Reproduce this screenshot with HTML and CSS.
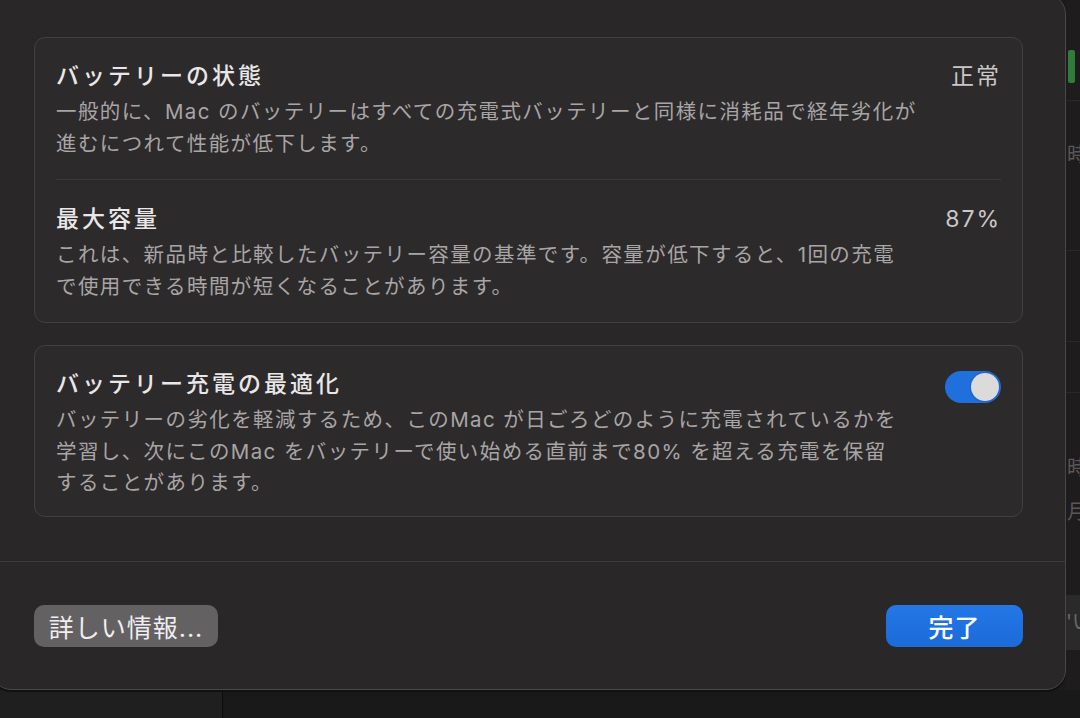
FILE: index.html
```html
<!DOCTYPE html>
<html lang="ja">
<head>
  <meta charset="UTF-8">
  <meta name="viewport" content="width=device-width, initial-scale=1.0">
  <title>バッテリーの状態</title>
  <link rel="stylesheet" href="styles.css">
</head>
<body>
  <div class="screen">
    <div class="sheet">
      <div class="sheet-body">

        <!-- Health card -->
        <section class="card">
          <div class="row">
            <div class="row-text">
              <h3 class="row-title">バッテリーの状態</h3>
              <p class="row-desc">一般的に、Mac のバッテリーはすべての充電式バッテリーと同様に消耗品で経年劣化が<br>進むにつれて性能が低下します。</p>
            </div>
            <span class="row-value">正常</span>
          </div>
          <div class="row">
            <div class="row-text">
              <h3 class="row-title">最大容量</h3>
              <p class="row-desc">これは、新品時と比較したバッテリー容量の基準です。容量が低下すると、1回の充電<br>で使用できる時間が短くなることがあります。</p>
            </div>
            <span class="row-value">87%</span>
          </div>
        </section>

        <!-- Optimized charging card -->
        <section class="card card-single">
          <div class="row">
            <div class="row-text">
              <h3 class="row-title">バッテリー充電の最適化</h3>
              <p class="row-desc">バッテリーの劣化を軽減するため、このMac が日ごろどのように充電されているかを<br>学習し、次にこのMac をバッテリーで使い始める直前まで80% を超える充電を保留<br>することがあります。</p>
            </div>
            <span class="toggle on"><span class="knob"></span></span>
          </div>
        </section>

      </div>
      <div class="sheet-footer">
        <button type="button" class="btn btn-grey">詳しい情報...</button>
        <button type="button" class="btn btn-blue">完了</button>
      </div>
    </div>

    <!-- window behind the sheet -->
    <div class="side">
      <span class="side-bar"></span>
      <span class="side-line line-a"></span>
      <span class="side-text text-a">時</span>
      <span class="side-line line-b"></span>
      <span class="side-line line-c"></span>
      <span class="side-line line-d"></span>
      <span class="side-text text-b">時</span>
      <span class="side-text text-c">月</span>
      <span class="side-box">'い</span>
    </div>
    <div class="under">
      <span class="under-left"></span>
    </div>
  </div>
</body>
</html>
```

FILE: styles.css
```css
body {
  margin: 0;
  background: #1b1a1b;
  font-family: "Inter", "Noto Sans CJK JP", sans-serif;
}

.screen {
  width: 1080px;
  height: 718px;
  display: grid;
  grid-template-columns: 1066px 14px;
  grid-template-rows: 690px 28px;
  overflow: hidden;
  background: #1c1b1c;
}

/* Sheet */
.sheet {
  grid-column: 1;
  grid-row: 1;
  margin: -6px 0 0 -9px;
  display: flex;
  flex-direction: column;
  background: #2a2728;
  border: 1px solid #4a4748;
  border-radius: 20px;
  box-shadow: 0 2px 0 #121112;
  position: relative;
  z-index: 1;
}

.sheet-body {
  flex: 1;
  display: flex;
  flex-direction: column;
  gap: 22px;
  padding: 42px 42px 0 42px;
}

.sheet-footer {
  display: flex;
  justify-content: space-between;
  align-items: center;
  border-top: 1px solid #3d3a3b;
  padding: 43px 42px 42px 42px;
}

/* Cards */
.card {
  background: #2d2a2b;
  border: 1px solid #424040;
  border-radius: 11px;
  padding: 0 21px 0 21px;
}

.row {
  display: flex;
  align-items: flex-start;
  justify-content: space-between;
  padding: 22px 0 20px;
}

.row + .row {
  border-top: 1px solid #3b3839;
  padding-top: 23px;
}

.card-single .row {
  padding-bottom: 17px;
}

.row-text {
  flex: 1;
}

.row-title {
  margin: 0;
  font-size: 23px;
  line-height: 32px;
  font-weight: 500;
  letter-spacing: 3px;
  color: #e9e7e8;
}

.row-desc {
  margin: 4px 0 0;
  font-size: 20.5px;
  line-height: 31.5px;
  letter-spacing: 1.4px;
  color: #a8a5a6;
  white-space: nowrap;
}

.row-value {
  font-size: 23px;
  line-height: 32px;
  letter-spacing: 2px;
  color: #cac7c8;
}

/* Toggle */
.toggle {
  display: flex;
  justify-content: flex-end;
  align-items: center;
  width: 56px;
  height: 32px;
  margin-top: 3px;
  padding: 0 2px;
  box-sizing: border-box;
  border-radius: 16px;
  background: #1f6fdc;
}

.knob {
  width: 28px;
  height: 28px;
  border-radius: 50%;
  background: #dcdbdc;
  box-shadow: 0 0 2px rgba(0, 0, 0, 0.35);
}

/* Buttons */
.btn {
  height: 42px;
  border: none;
  border-radius: 10px;
  font-family: inherit;
  font-size: 25px;
  letter-spacing: 1px;
  color: #f0eef0;
  cursor: pointer;
}

.btn-grey {
  width: 184px;
  background: #636162;
}

.btn-blue {
  width: 137px;
  background: linear-gradient(to bottom, #2477e6, #1b6bd8);
  color: #fff;
  font-weight: 500;
}

/* Window behind */
.side {
  grid-column: 2;
  grid-row: 1;
  display: flex;
  flex-direction: column;
  background: #1e1c1d;
  overflow: hidden;
  padding-top: 50px;
  font-size: 20px;
  color: #5a5758;
}

.side-bar {
  flex: none;
  width: 7px;
  height: 33px;
  margin-left: 2px;
  background: #2f7d3a;
  border-radius: 2px;
}

.side-line {
  flex: none;
  height: 1px;
  background: #2a2829;
}

.line-a { margin-top: 17px; }
.line-b { margin-top: 81px; }
.line-c { margin-top: 90px; }
.line-d { margin-top: 50px; }

.side-text {
  flex: none;
  padding-left: 1px;
  line-height: 28px;
}

.text-a { margin-top: 40px; }
.text-b { margin-top: 61px; }
.text-c { margin-top: 16px; }

.side-box {
  flex: none;
  margin-top: 69px;
  height: 55px;
  line-height: 55px;
  background: #2b2a2b;
  color: #6a6869;
}

.under {
  grid-column: 1 / span 2;
  grid-row: 2;
  display: flex;
  background: #1a191a;
}

.under-left {
  width: 222px;
  border-right: 1px solid #0d0c0d;
  background: #201f20;
}
```
